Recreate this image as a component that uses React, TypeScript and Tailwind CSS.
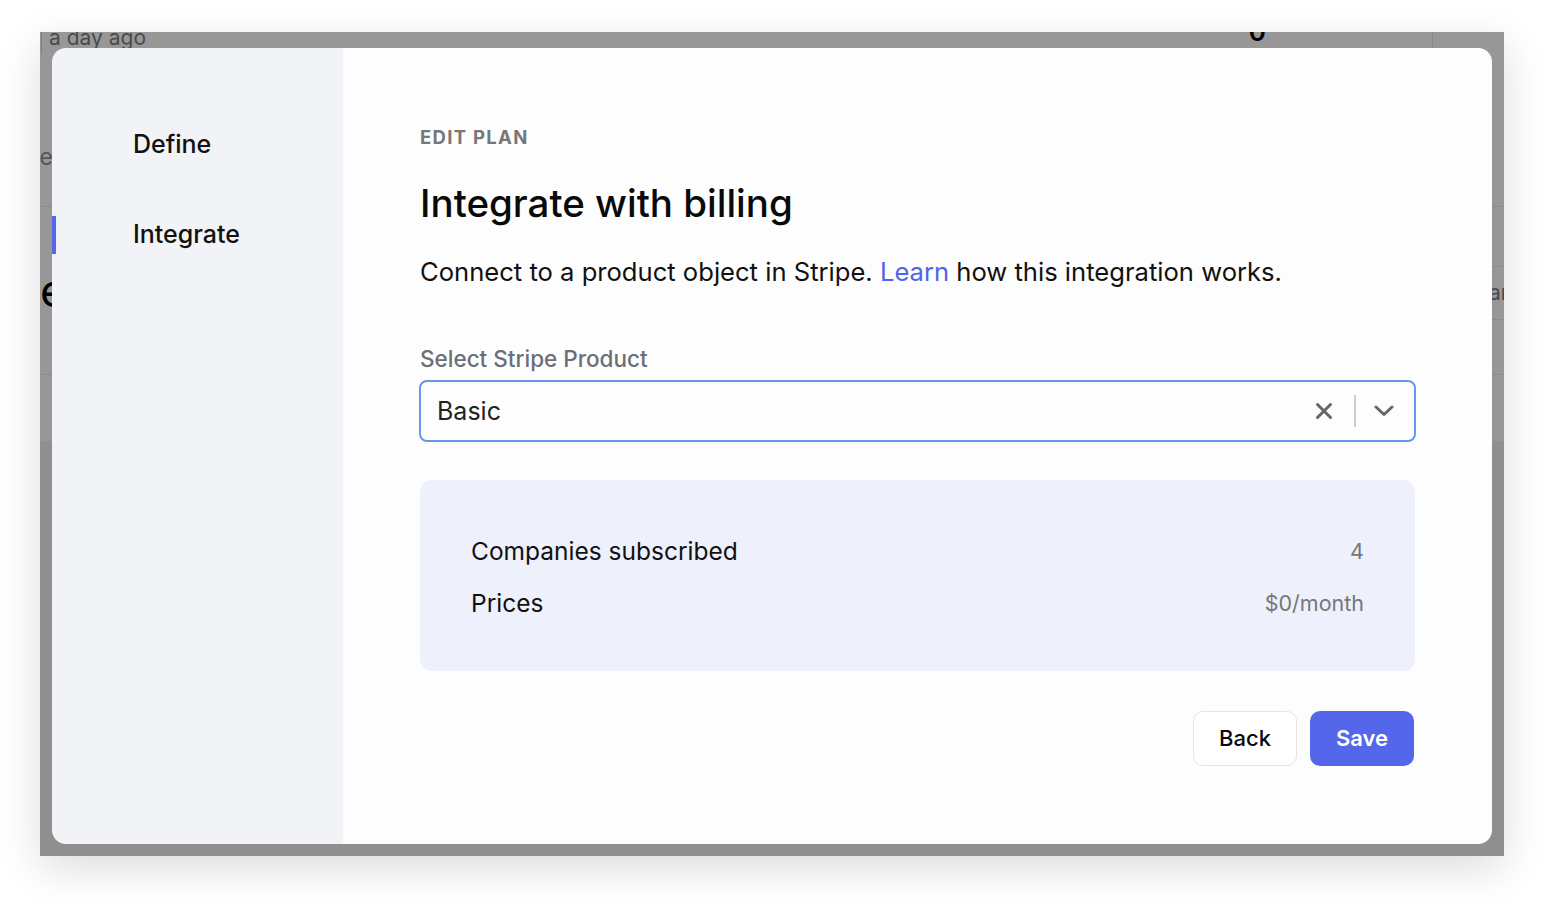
import React from "react";

function XIcon() {
  return (
    <svg width="18" height="18" viewBox="0 0 18 18" fill="none">
      <path d="M2.5 2.5L15.5 15.5M15.5 2.5L2.5 15.5" stroke="#666666" strokeWidth="3" strokeLinecap="round" />
    </svg>
  );
}

function ChevronIcon() {
  return (
    <svg width="20" height="12" viewBox="0 0 20 12" fill="none">
      <path d="M2 2L10 9.5L18 2" stroke="#666666" strokeWidth="3" strokeLinecap="round" strokeLinejoin="round" />
    </svg>
  );
}

// page behind the dim overlay, only strips of it show around the modal
function BackgroundPage() {
  return (
    <div className="flex flex-col h-full">
      <div className="h-[409px] flex flex-col">
        <div className="h-[175px] border-b border-[#8c8c8c] flex justify-between">
          <div className="flex flex-col">
            <div className="-mt-[9px] ml-[1px] pl-[7px] border-l border-[#7d7d7d] text-[21px] text-[#4a4a4a] leading-[30px] whitespace-nowrap">a day ago</div>
            <div className="mt-[90px] w-[13px] flex justify-end text-[23px] text-[#555555] leading-[28px] whitespace-nowrap">e</div>
          </div>
          <div className="flex">
            <div className="mt-[-14px] mr-[166px] text-[26px] font-semibold text-black leading-[28px]">0</div>
            <div className="h-[16px] border-l border-[#8a8a8a] w-[72px]"></div>
          </div>
        </div>
        <div className="h-[168px] border-b border-[#8c8c8c] flex justify-between">
          <div className="mt-[58px] w-[26px] flex justify-start text-[46px] text-black leading-[50px]">e</div>
          <div className="w-[40px] flex flex-col">
            <div className="h-[60px] border-b border-[#8c8c8c]"></div>
            <div className="h-[53px] border-b border-[#8c8c8c] flex items-center pl-[25px] text-[21px] text-[#4a4a4a] whitespace-nowrap">ar</div>
          </div>
        </div>
        <div className="flex-1 bg-[#979797]"></div>
      </div>
      <div className="flex-1 bg-[#8f8f8f]"></div>
    </div>
  );
}

export default function App() {
  const rows = [
    { label: "Companies subscribed", value: "4" },
    { label: "Prices", value: "$0/month" },
  ];

  return (
    <div className="w-[1544px] h-[904px] bg-white pt-[32px] pl-[40px] font-['Inter',sans-serif]">
      <div className="relative w-[1464px] h-[824px] bg-[#979797] overflow-hidden shadow-[0_12px_40px_rgba(0,0,0,0.14)]">
        <BackgroundPage />

        <div className="absolute left-[12px] top-[16px] w-[1440px] h-[796px] rounded-[14px] overflow-hidden flex">
          <aside className="w-[291px] bg-[#f2f3f7] pt-[78px] flex flex-col gap-[52px]">
            <div className="h-[38px] flex items-center">
              <div className="w-[4px] h-full"></div>
              <span className="ml-[77px] text-[25px] font-medium text-[#111111]">Define</span>
            </div>
            <div className="h-[38px] flex items-center">
              <div className="w-[4px] h-full bg-[#5466ea]"></div>
              <span className="ml-[77px] text-[25px] font-medium text-[#111111]">Integrate</span>
            </div>
          </aside>

          <main className="flex-1 bg-[#fdfdfd] pl-[77px] pr-[77px] pt-[77px] flex flex-col">
            <div className="text-[18.5px] leading-[24px] font-bold tracking-[0.07em] text-[#777777]">EDIT PLAN</div>
            <h1 className="mt-[32px] text-[38.5px] leading-[44px] font-medium text-[#0a0a0a]">Integrate with billing</h1>
            <p className="mt-[31px] text-[25.6px] leading-[32px] text-[#111111]">
              Connect to a product object in Stripe. <span className="text-[#4f63ea]">Learn</span> how this integration works.
            </p>

            <label className="mt-[57px] text-[22.5px] leading-[28px] font-medium text-[#6b6f78]">Select Stripe Product</label>
            <div className="mt-[7px] -mx-[1px] h-[62px] border-2 border-[#6b95ea] rounded-[8px] flex items-center pl-[16px] pr-[20px]">
              <span className="flex-1 text-[25px] text-[#222222] pt-[2px]">Basic</span>
              <XIcon />
              <div className="ml-[21px] mr-[18px] w-[2px] h-[32px] bg-[#cccccc]"></div>
              <ChevronIcon />
            </div>

            <div className="mt-[38px] h-[191px] rounded-[12px] bg-[#eef0fb] pl-[51px] pr-[51px] pt-[55px] flex flex-col gap-[20px]">
              {rows.map((r) => (
                <div key={r.label} className="h-[32px] flex items-center justify-between">
                  <span className="text-[24.5px] text-[#111111]">{r.label}</span>
                  <span className="text-[21.5px] text-[#777777]">{r.value}</span>
                </div>
              ))}
            </div>

            <div className="mt-[40px] flex justify-end gap-[13px] pr-[1px]">
              <button className="w-[104px] h-[55px] rounded-[10px] border border-[#e4e4e4] bg-white text-[22px] font-medium text-[#0a0a0a]">Back</button>
              <button className="w-[104px] h-[55px] rounded-[10px] bg-[#5466ea] text-[22px] font-semibold text-white">Save</button>
            </div>
          </main>
        </div>
      </div>
    </div>
  );
}
